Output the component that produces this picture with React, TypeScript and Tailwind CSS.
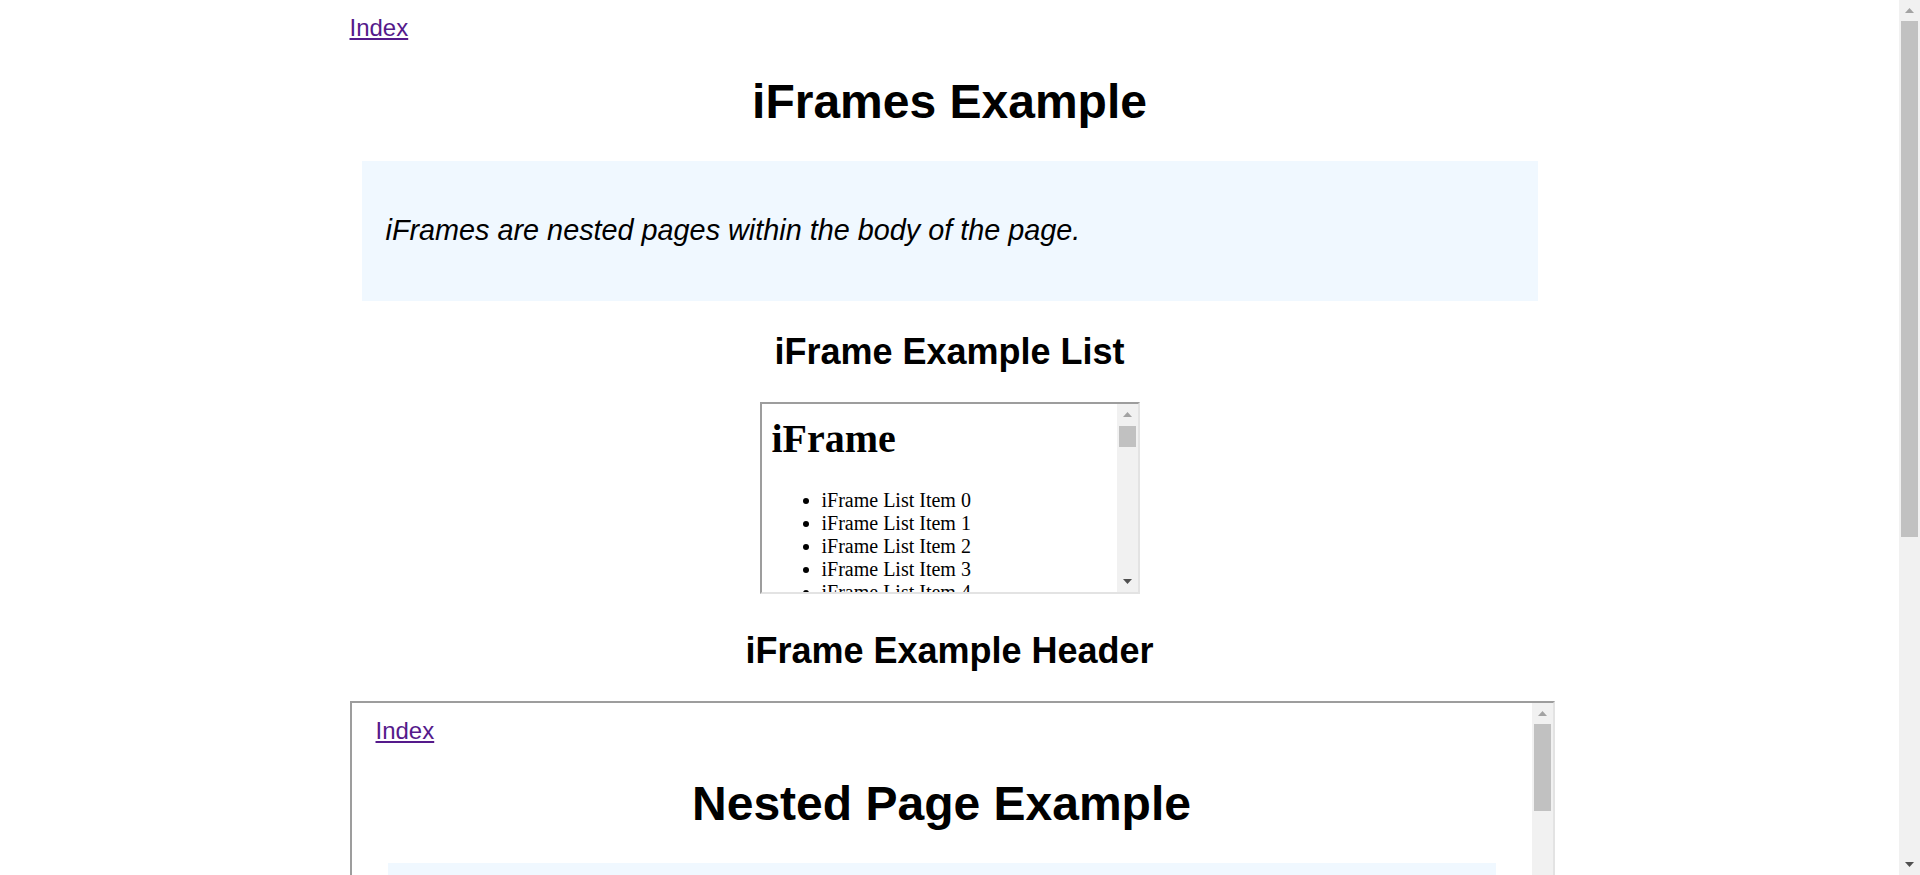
import React from "react";
import clsx from "clsx";

const sans = "font-['Liberation_Sans',Arial,sans-serif]";
const serif = "font-['Liberation_Serif','Times_New_Roman',serif]";

function Arrow({ dir, dark }: { dir: "up" | "down"; dark?: boolean }) {
  return (
    <div className="flex h-[21px] shrink-0 items-center justify-center">
      <svg width="9" height="5" viewBox="0 0 9 5">
        <polygon
          points={dir === "up" ? "0,5 4.5,0 9,5" : "0,0 9,0 4.5,5"}
          fill={dark ? "#505050" : "#a3a3a3"}
        />
      </svg>
    </div>
  );
}

// classic windows-style scrollbar, thumb sits at the top
function Scrollbar({ thumb }: { thumb: string }) {
  return (
    <div className="flex w-[21px] shrink-0 flex-col bg-[#f1f1f1]">
      <Arrow dir="up" />
      <div className={clsx("mx-[2px] shrink-0 bg-[#c1c1c1]", thumb)} />
      <div className="flex-1" />
      <Arrow dir="down" dark />
    </div>
  );
}

function IndexLink() {
  return (
    <div>
      <a href="#" className="text-[#551a8b] underline">
        Index
      </a>
    </div>
  );
}

function Note({ children }: { children: React.ReactNode }) {
  return (
    <div className="mx-[12px] flex h-[140px] items-center bg-[#f0f8ff] px-[24px]">
      <p className="text-[28.8px] italic leading-[33px]">{children}</p>
    </div>
  );
}

function ListFrame() {
  const items = Array.from({ length: 10 }, (_, i) => i);

  return (
    <div className="flex h-[192px] w-[380px] border-2 border-t-[#9d9d9d] border-l-[#9d9d9d] border-r-[#e3e3e3] border-b-[#e3e3e3] bg-white">
      <div className={clsx("min-w-0 flex-1 overflow-hidden pl-[10px] pt-[12px] text-left", serif)}>
        <h1 className="mb-[27px] text-[40px] font-bold leading-[46px]">iFrame</h1>
        <ul className="list-disc pl-[50px] text-[20px] leading-[23px]">
          {items.map((i) => (
            <li key={i}>iFrame List Item {i}</li>
          ))}
        </ul>
      </div>
      <Scrollbar thumb="mt-[1px] h-[21px]" />
    </div>
  );
}

function NestedFrame() {
  return (
    <div className="mt-[1px] flex h-[420px] w-[1205px] border-2 border-t-[#9d9d9d] border-l-[#9d9d9d] border-r-[#e3e3e3] border-b-[#e3e3e3] bg-white">
      <div className="min-w-0 flex-1 overflow-hidden px-[24px] pt-[14px]">
        <IndexLink />
        <h1 className="my-[32px] text-center text-[48px] font-bold leading-[55.2px]">
          Nested Page Example
        </h1>
        <Note>This page is shown nested inside an iFrame.</Note>
      </div>
      <Scrollbar thumb="h-[87px]" />
    </div>
  );
}

export default function App() {
  return (
    <div className={clsx("flex h-[875px] w-full overflow-hidden bg-white text-black", sans)}>
      <main className="min-w-0 flex-1 overflow-hidden">
        <div className="mx-auto max-w-[1200px] pt-[14px] text-[24px] leading-[27.6px]">
          <IndexLink />

          <h1 className="my-[32px] text-center text-[48px] font-bold leading-[55.2px]">
            iFrames Example
          </h1>

          <Note>iFrames are nested pages within the body of the page.</Note>

          <h2 className="my-[30px] text-center text-[36px] font-bold leading-[41.4px]">
            iFrame Example List
          </h2>

          <div className="flex justify-center pb-[6px]">
            <ListFrame />
          </div>

          <h2 className="mb-[29px] mt-[30px] text-center text-[36px] font-bold leading-[41.4px]">
            iFrame Example Header
          </h2>

          <NestedFrame />
        </div>
      </main>

      <Scrollbar thumb="h-[516px]" />
    </div>
  );
}
